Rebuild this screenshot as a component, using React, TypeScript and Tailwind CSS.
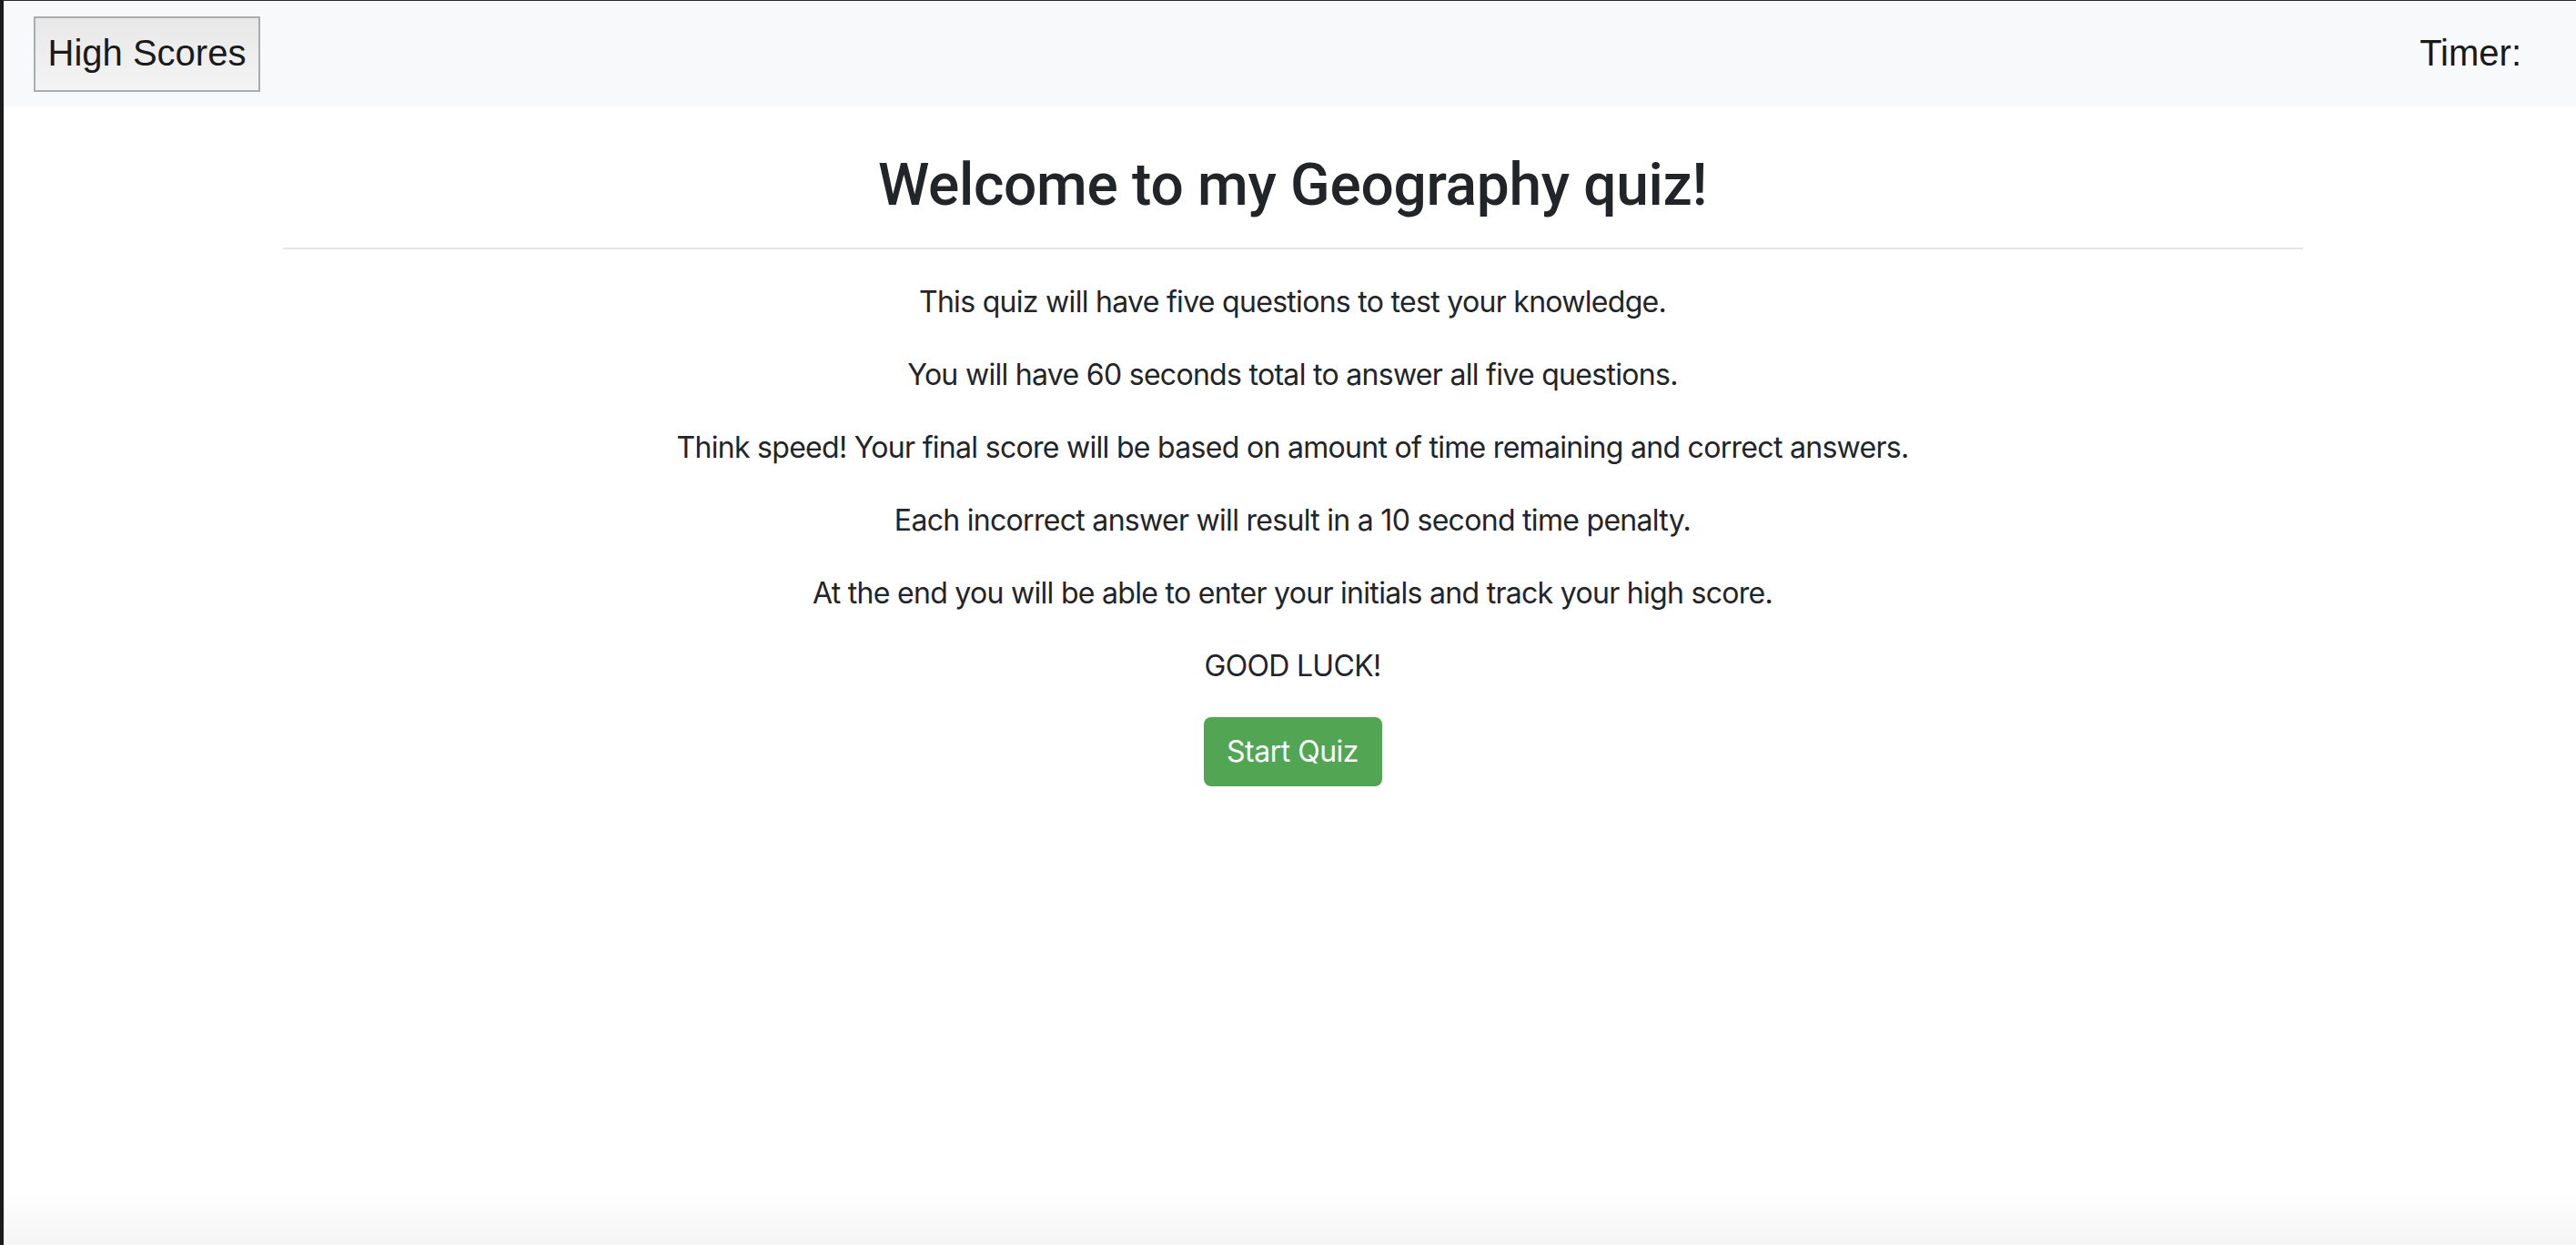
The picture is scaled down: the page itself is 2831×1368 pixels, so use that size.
import React from 'react';

const rules = [
  'This quiz will have five questions to test your knowledge.',
  'You will have 60 seconds total to answer all five questions.',
  'Think speed! Your final score will be based on amount of time remaining and correct answers.',
  'Each incorrect answer will result in a 10 second time penalty.',
  'At the end you will be able to enter your initials and track your high score.',
  'GOOD LUCK!',
];

const App: React.FC = () => {
  return (
    <div className="flex h-screen w-full overflow-hidden bg-white">
      <div className="w-[4px] shrink-0 bg-[#1b1b1c]" />
      <div className="flex min-w-0 flex-1 flex-col border-t border-[#2a2a2a]">
        {/* top bar */}
        <header className="flex h-[116px] shrink-0 items-center justify-between bg-[#f8f9fa] pl-[33px] pr-[60px] font-['Liberation_Sans',Arial,sans-serif] text-[40px] text-[#1a1a1a]">
          <button className="flex h-[83px] w-[249px] items-center justify-center border-2 border-[#acacac] bg-linear-to-b from-[#e8e8e8] to-[#f4f4f4] pb-[2px]">
            High Scores
          </button>
          <span className="mt-[-2px]">Timer:</span>
        </header>

        {/* intro */}
        <div className="pl-[6px]">
          <main className="mx-auto flex w-[2220px] flex-col items-center pt-[49px] text-[#212529]">
            <h1 className="font-['Roboto',Arial,sans-serif] text-[64px] font-medium leading-[76px] tracking-[-0.3px]">
              Welcome to my Geography quiz!
            </h1>
            <hr className="mt-[30px] w-full border-t-2 border-[#e6e6e6]" />
            <div className="mt-[34px] flex flex-col items-center gap-8 font-['Inter',sans-serif] text-[32px] leading-[48px] tracking-[-0.7px]">
              {rules.map((r) => (
                <p key={r}>{r}</p>
              ))}
            </div>
            <button className="mt-8 flex h-[76px] w-[196px] items-center justify-center rounded-[8px] bg-[#52a552] font-['Inter',sans-serif] text-[32px] tracking-[-0.5px] text-white">
              Start Quiz
            </button>
          </main>
        </div>

        <div className="flex-1" />
        <div className="h-[60px] shrink-0 bg-linear-to-b from-white to-[#f5f5f5]" />
      </div>
    </div>
  );
};

export default App;
